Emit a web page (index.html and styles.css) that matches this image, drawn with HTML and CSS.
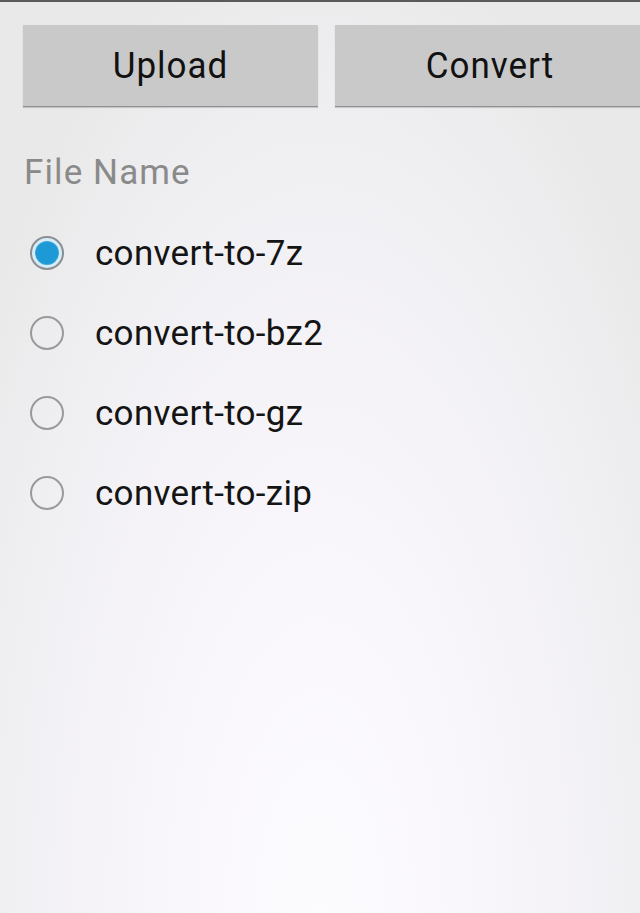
FILE: index.html
```html
<!DOCTYPE html>
<html>
<head>
<meta charset="utf-8">
<link rel="stylesheet" href="styles.css">
</head>
<body>
<div class="screen">
  <div class="topline"></div>
  <div class="buttons">
    <div class="btn"><span>Upload</span></div>
    <div class="btn"><span>Convert</span></div>
  </div>
  <div class="label">File Name</div>
  <div class="radios">
    <div class="radio-row"><span class="radio checked"><span class="dot"></span></span><span class="rtext">convert-to-7z</span></div>
    <div class="radio-row"><span class="radio"></span><span class="rtext">convert-to-bz2</span></div>
    <div class="radio-row"><span class="radio"></span><span class="rtext">convert-to-gz</span></div>
    <div class="radio-row"><span class="radio"></span><span class="rtext">convert-to-zip</span></div>
  </div>
</div>
</body>
</html>
```
FILE: styles.css
```css
html, body {
  margin: 0;
  padding: 0;
}
body {
  width: 640px;
  height: 913px;
  overflow: hidden;
  font-family: Roboto, "Noto Sans", sans-serif;
}
.screen {
  width: 640px;
  height: 913px;
  background: radial-gradient(ellipse 420px 1000px at 50% 100%, #fcfbfe 0%, #f8f6fb 40%, #efeef1 80%, #e9e9e9 100%);
  background-color: #e9e9e9;
  overflow: hidden;
}
.topline {
  height: 2px;
  background: #5a5a5a;
}
.buttons {
  display: flex;
  gap: 17px;
  padding: 23px 0 0 23px;
  width: 640px;
  box-sizing: border-box;
}
.btn {
  flex: 0 0 295px;
  height: 81px;
  background: #c9c9c9;
  box-shadow: 0 1px 0 #8f8f8f, 0 2px 1px rgba(0,0,0,0.15);
  display: flex;
  align-items: center;
  justify-content: center;
  color: #111;
  font-size: 35px;
  letter-spacing: 1px;
}
.btn span {
  display: inline-block;
  transform: scaleY(1.06);
}
.btn + .btn {
  flex: 0 0 310px;
}
.label {
  margin: 45px 0 0 24px;
  color: #8a8a8a;
  font-size: 35px;
  letter-spacing: 1.1px;
  line-height: 44px;
}
.radios {
  margin-top: 18px;
}
.radio-row {
  display: flex;
  align-items: center;
  height: 80px;
  padding-left: 30px;
}
.radio {
  width: 34px;
  height: 34px;
  border: 2px solid #9a9a9a;
  border-radius: 50%;
  box-sizing: border-box;
  display: flex;
  align-items: center;
  justify-content: center;
  flex: none;
}
.radio.checked {
  border-color: #8a8f94;
  background: #d6ecf6;
}
.dot {
  width: 22px;
  height: 22px;
  border-radius: 50%;
  background: #1d9ad6;
  box-shadow: 0 0 0 1px #3aa6da;
}
.rtext {
  margin-left: 31px;
  font-size: 35px;
  letter-spacing: 0.3px;
  color: #141414;
}
```
